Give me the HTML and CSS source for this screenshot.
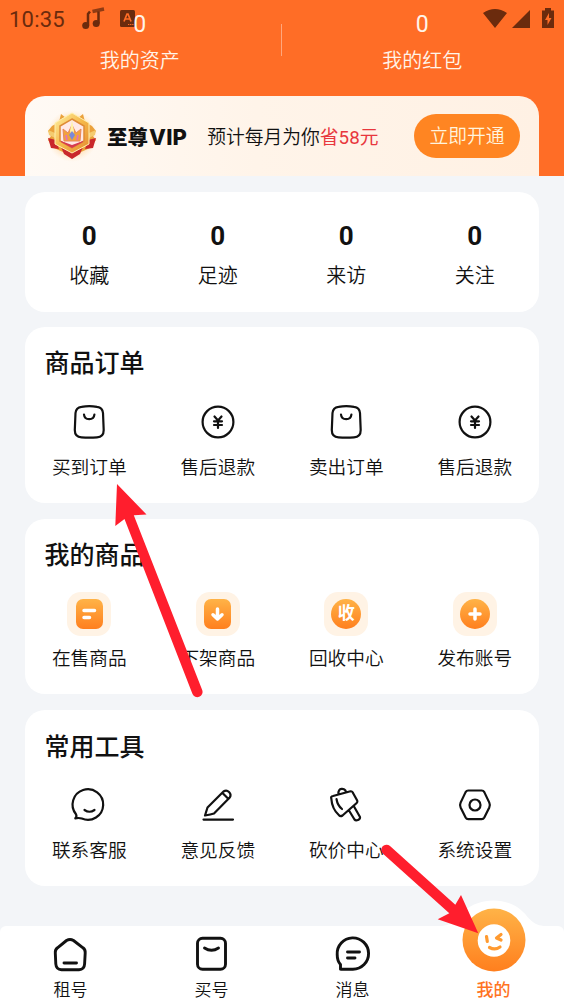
FILE: index.html
```html
<!DOCTYPE html>
<html lang="zh-CN">
<head>
<meta charset="utf-8">
<title>我的</title>
<link rel="stylesheet" href="styles.css">
</head>
<body>
<div class="screen">
  <div class="status">
    <span class="clock">10:35</span>
    <svg class="music" width="24" height="24" viewBox="0 0 24 24"><g fill="currentColor"><circle cx="4.700" cy="18.500" r="3.500"/><circle cx="15.200" cy="16.500" r="3.500"/></g><path d="M7 18.500V7l2-2.500M17.500 16.500V4.500" fill="none" stroke="currentColor" stroke-width="2.500"/><path d="M11.500 4.500 23 2" stroke="currentColor" stroke-width="3.500" opacity=".75"/></svg>
    <svg class="keyboard" width="15" height="17" viewBox="0 0 15 17"><rect width="15" height="17" rx="1.500" fill="currentColor"/><path d="M4 11.500 7 4h1l3 7.500M5 9h5" fill="none" stroke="#ff6d26" stroke-width="1.700"/><path d="M8 14.500h5.500" stroke="#ff6d26" stroke-dasharray="1.300 .8"/></svg>
    <svg class="signals" width="72" height="21" viewBox="0 0 72 21" fill="currentColor"><path d="M0 5Q12-3 24 5L12 20ZM29 20 47 2v18ZM59 2.500h3V0h6v2.500h3V20H59Z"/><path d="m66 5-4 7h2.500v5l4-7H66Z" fill="#ff6d26"/></svg>
  </div>

  <header class="header">
    <div class="assets">
      <div class="asset"><span class="asset-num">0</span><span class="asset-label">我的资产</span></div>
      <div class="asset-divider"></div>
      <div class="asset"><span class="asset-num">0</span><span class="asset-label">我的红包</span></div>
    </div>
    <div class="vip">
      <svg class="medal" width="52" height="52" viewBox="0 0 52 52">
        <defs>
          <linearGradient id="gold" x2="1" y2="1"><stop stop-color="#fff0a0"/><stop offset=".5" stop-color="#f5b94b"/><stop offset="1" stop-color="#e58a30"/></linearGradient>
          <radialGradient id="halo"><stop offset=".65" stop-color="#ffcf8e" stop-opacity=".6"/><stop offset="1" stop-color="#ffe3bd" stop-opacity="0"/></radialGradient>
        </defs>
        <circle cx="26" cy="26" r="26" fill="url(#halo)"/>
        <path d="m15 4-2 8-7 4-4 5 3 5-3 4 6 8 9 4 9 6 9-6 9-4 6-8-3-4 3-5-4-5-7-4-2-8-5 4H20Z" fill="#eba23c"/>
        <path d="m2 28 8 2 3 9-8-1ZM50 28l-8 2-3 9 8-1ZM15 37l11 5 11-5-3 7-8 5-8-5Z" fill="#c9272b"/>
        <path d="m2 20 7 3v5l-6-3ZM50 20l-7 3v5l6-3Z" fill="#f4cc70"/>
        <path d="m26 3 17 10v21L26 43 9 34V13Z" fill="url(#gold)" stroke="#fff0af"/>
        <path d="m26 9 12 7v15l-12 7-12-7V16Z" fill="#ffe9e6" stroke="#df8b36" stroke-width="1.500"/>
        <path d="m15 31 11 4 11-4v1l-11 6-11-6Z" fill="#d63b50"/>
        <path d="m17 19 5 4 4-8 4 8 5-4-1 12H18Z" fill="#f2a43c" stroke="#e8875c"/>
        <path d="m26 10 2 11-2 7-2-7Z" fill="#fff2a8"/><path d="m26 21 3 4-3 5-3-5Z" fill="#7b89da"/>
        <path d="m20 25 1 5M32 25l-1 5" stroke="#e474b3" stroke-width="1.800"/>
      </svg>
      <strong class="vip-title">至尊<span class="latin">VIP</span></strong>
      <span class="vip-text">预计每月为你<em class="save">省58元</em></span>
      <button class="vip-button">立即开通</button>
    </div>
  </header>

  <main class="content">
    <section class="card stats">
      <div class="stat"><b class="stat-num">0</b><span class="stat-label">收藏</span></div>
      <div class="stat"><b class="stat-num">0</b><span class="stat-label">足迹</span></div>
      <div class="stat"><b class="stat-num">0</b><span class="stat-label">来访</span></div>
      <div class="stat"><b class="stat-num">0</b><span class="stat-label">关注</span></div>
    </section>

    <section class="card">
      <h2 class="card-title">商品订单</h2>
      <div class="grid">
        <div class="item"><svg class="icon" viewBox="0 0 44 44"><path d="M14.500 6.800Q22.300 5.600 30 6.800 35.600 7.500 36 13L36.700 30Q36.700 37 30 37.300 22.300 37.800 14.500 37.300 7.800 37 7.800 30L8.500 13Q9 7.500 14.500 6.800ZM17 14.500c.5 6.200 9.900 6.200 10.400 0"/></svg><span>买到订单</span></div>
        <div class="item"><svg class="icon" viewBox="0 0 44 44"><circle cx="22" cy="22" r="15.400"/><path d="m18.500 16.500 3.500 4 3.500-4M18 21.300h8M18 25h8M22 20.500v7.500"/></svg><span>售后退款</span></div>
        <div class="item"><svg class="icon" viewBox="0 0 44 44"><path d="M14.500 6.800Q22.300 5.600 30 6.800 35.600 7.500 36 13L36.700 30Q36.700 37 30 37.300 22.300 37.800 14.500 37.300 7.800 37 7.800 30L8.500 13Q9 7.500 14.500 6.800ZM17 14.500c.5 6.200 9.900 6.200 10.400 0"/></svg><span>卖出订单</span></div>
        <div class="item"><svg class="icon" viewBox="0 0 44 44"><circle cx="22" cy="22" r="15.400"/><path d="m18.500 16.500 3.500 4 3.500-4M18 21.300h8M18 25h8M22 20.500v7.500"/></svg><span>售后退款</span></div>
      </div>
    </section>

    <section class="card">
      <h2 class="card-title">我的商品</h2>
      <div class="grid">
        <div class="item"><div class="tile"><svg class="badge square" viewBox="0 0 27 30"><path d="M8 11.500h10.500M8 18.500h5.500"/></svg></div><span>在售商品</span></div>
        <div class="item"><div class="tile"><svg class="badge square" viewBox="0 0 27 30"><path d="M13.500 10v10M9 15.800l4.500 4.200 4.500-4.200"/></svg></div><span>下架商品</span></div>
        <div class="item"><div class="tile"><div class="badge round">收</div></div><span>回收中心</span></div>
        <div class="item"><div class="tile"><svg class="badge round" viewBox="0 0 30 30"><path d="M15 10v10M10 15h10"/></svg></div><span>发布账号</span></div>
      </div>
    </section>

    <section class="card">
      <h2 class="card-title">常用工具</h2>
      <div class="grid">
        <div class="item"><svg class="icon" viewBox="0 0 44 44"><path d="M9 31.200A15.300 15.300 0 1 1 14.800 35.600Q12.500 34.600 8.300 35.300 10.200 33.300 9 31.200ZM17.500 27q5 3.500 10 0"/></svg><span>联系客服</span></div>
        <div class="item"><svg class="icon" viewBox="0 0 44 44"><path d="M7.500 36.600h29.500M9 32.500l2.500-8L27.500 8.500q3-2 5.500.5 2.800 2.800.5 5.800L18 30.500q-3 1-9 2ZM27 10.500l5.500 5.500"/></svg><span>意见反馈</span></div>
        <div class="item"><svg class="icon" viewBox="0 0 44 44"><path d="M7.300 15.500Q6.500 13.500 9 13L26.500 8.300Q28.500 8 29 10L33.200 17.500Q33.800 19 32.700 20L18.500 32.500Q16.500 34 15 32.300 8 26 7.300 15.500ZM14.500 11C13.500 4.500 21 4.500 22 9M12.500 16q1 6.500 5.500 10M25 27.500l5.500 9c1.500 2 6 .3 5.500-2.500l-6-10.500"/></svg><span>砍价中心</span></div>
        <div class="item"><svg class="icon" viewBox="0 0 44 44"><path d="M15.200 7.500h13.500q1.700 0 2.600 1.600l5 10.500q1.100 2.400 0 4.800l-5 10.100q-.9 1.700-2.600 1.700H15.200q-1.700 0-2.600-1.700l-5-10.100q-1.100-2.400 0-4.800l5-10.500q.9-1.600 2.600-1.600Z"/><circle cx="22" cy="22" r="5.500"/></svg><span>系统设置</span></div>
      </div>
    </section>
  </main>

  <nav class="nav">
    <svg class="nav-hump" width="106" height="30" viewBox="0 0 106 30"><path d="M0 27C14 27 17 18 24 12 40-2 67-2 82 12 89 18 92 27 106 27V30H0Z" fill="#fff"/></svg>
    <div class="nav-item"><svg class="nav-icon" viewBox="0 0 40 40"><path d="M16.500 5.500Q20 3.500 23.500 5.500L33 12.800Q35.500 14.600 35.200 18L34.600 29Q34.300 34.500 29 34.700H11.500Q6.200 34.500 5.800 29L5.300 18Q5 14.600 7.500 12.800ZM14 28h12.500"/></svg><span>租号</span></div>
    <div class="nav-item"><svg class="nav-icon" viewBox="0 0 40 40"><rect x="6.500" y="3.300" width="28" height="31" rx="5"/><path d="M13.500 13q7 4.500 14 0"/></svg><span>买号</span></div>
    <div class="nav-item"><svg class="nav-icon" viewBox="0 0 40 40"><path d="M8.500 34.200V29.500Q5.200 26 5.200 19.500A15.700 15.700 0 1 1 20.900 34.300H9ZM15.500 17H27.500M15.500 23H23"/></svg><span>消息</span></div>
    <div class="nav-item active">
      <svg class="face" width="64" height="64" viewBox="0 0 64 64"><defs><linearGradient id="orange" x2="0" y2="1"><stop stop-color="#ffb347"/><stop offset="1" stop-color="#ff7f1e"/></linearGradient></defs><circle cx="32" cy="32" r="31.500" fill="url(#orange)"/><circle cx="32" cy="32.500" r="16.300" fill="#fff"/><path d="M24.500 28.500l.8 5M39 26.500l-4.500 3.500 4.500 2M27.500 39.500q5.500 3 10.500-.5" fill="none" stroke="#ff9a30" stroke-width="3.200" stroke-linecap="round" stroke-linejoin="round"/></svg>
      <span>我的</span>
    </div>
  </nav>

  <svg class="arrows" width="564" height="1004" viewBox="0 0 564 1004" fill="#ff1e2d">
    <path d="m117 484 29.500 30.500-12.700.7L202.200 690a5 5 0 0 1-9.800 3.800L124.500 519l-9.200 7Z"/>
    <path d="M478.300 933.300 461 895l-5.700 9.800-65.300-58.800a5.200 5.200 0 0 0-7 7.700l66.300 59.600-11.600 6Z"/>
  </svg>
</div>
</body>
</html>
```
FILE: styles.css
```css
* { box-sizing: border-box; }

body {
  margin: 0;
  background: #f3f5f8;
  color: #111;
  font-family: Roboto, "Noto Sans CJK SC", sans-serif;
}

.screen {
  position: relative;
  display: flex;
  flex-direction: column;
  width: 564px;
  height: 1004px;
  overflow: hidden;
}

.status {
  position: absolute;
  z-index: 1;
  inset: 0 0 auto;
  height: 40px;
  color: #6b2b0d;
}
.clock { position: absolute; left: 9px; top: 7px; font-size: 22px; line-height: 26px; letter-spacing: 0.2px; }
.music { position: absolute; left: 81px; top: 7px; }
.keyboard { position: absolute; left: 120px; top: 10px; }
.signals { position: absolute; left: 483px; top: 8px; }

.header {
  display: flex;
  flex-direction: column;
  justify-content: space-between;
  height: 176px;
  padding: 10px 25px 0;
  background: #ff6d26;
}
.assets {
  position: relative;
  z-index: 2;
  display: flex;
  align-items: flex-start;
  margin: 0 -24px 0 -26px;
  color: #fff4e9;
}
.asset { flex: 1; display: flex; flex-direction: column; align-items: center; gap: 6px; }
.asset-num { font-size: 23px; line-height: 30px; }
.asset-label { font-size: 20px; line-height: 30px; font-weight: 350; }
.asset-divider { width: 1px; height: 32px; margin-top: 14px; background: #ffa77d; }

.vip {
  display: flex;
  align-items: center;
  height: 80px;
  padding: 0 19px 0 21px;
  border-radius: 20px 20px 0 0;
  background: linear-gradient(90deg, #fffaf5, #fff4e9 45%, #fff1e4);
}
.vip-title { margin-left: 9px; padding-top: 2px; font-size: 20.500px; line-height: 28px; font-weight: 900; font-family: Inter, "Noto Sans CJK SC", sans-serif; }
.latin { margin-left: 1px; font-size: 22px; font-weight: 800; letter-spacing: 0.2px; }
.vip-text { margin-left: 20px; padding-top: 3px; font-size: 18.800px; line-height: 28px; font-weight: 350; white-space: nowrap; }
.save { font-style: normal; font-weight: 400; color: #e8373d; }
.vip-button {
  width: 106px;
  height: 44px;
  margin-left: auto;
  padding: 2px 0 0;
  border: 0;
  border-radius: 22px;
  background: #ff8522;
  color: #fff4df;
  font: 350 18.800px/42px Roboto, "Noto Sans CJK SC", sans-serif;
}

.content { display: flex; flex-direction: column; gap: 16px; padding: 16px 25px 0; }
.card { height: 175.600px; padding-top: 20.400px; border-radius: 20px; background: #fff; }
.stats { display: grid; grid-template-columns: repeat(4, 1fr); height: 119.500px; margin-bottom: -0.500px; padding-top: 28px; }
.stat { display: flex; flex-direction: column; align-items: center; gap: 8px; }
.stat-num { font-size: 26px; line-height: 32px; font-weight: 700; }
.stat-label { font-size: 20px; line-height: 32px; font-weight: 350; }
.card-title { margin: 0 0 4.800px 19.500px; font-size: 25px; line-height: 34px; font-weight: 500; }
.grid { display: grid; grid-template-columns: repeat(4, 1fr); }
.item { display: flex; flex-direction: column; align-items: center; gap: 9.500px; padding-top: 14px; font-size: 18.700px; line-height: 28px; font-weight: 350; }

.icon { width: 44px; height: 44px; }
.icon, .nav-icon { fill: none; stroke: #111; stroke-width: 2.200; stroke-linecap: round; stroke-linejoin: round; }
.tile { display: grid; place-items: center; width: 44px; height: 44px; border-radius: 14px; background: #fff3e5; }
.badge {
  background: linear-gradient(#ffb347, #ff7f1e);
  color: #fff;
  fill: none;
  stroke: #fff;
  stroke-width: 3.500;
  stroke-linecap: round;
  stroke-linejoin: round;
}
.square { width: 27px; height: 30px; border-radius: 7px; }
.round { width: 30px; height: 30px; border-radius: 50%; }
div.badge { font-size: 17px; line-height: 29px; font-weight: 700; text-align: center; }

.nav {
  position: relative;
  display: grid;
  grid-template-columns: repeat(4, 1fr);
  height: 78px;
  margin-top: auto;
  border-radius: 6px 6px 0 0;
  background: #fff;
}
.nav-hump { position: absolute; left: 440px; top: -27px; }
.nav-item { position: relative; display: flex; flex-direction: column; align-items: center; gap: 3px; padding-top: 9px; font-size: 17px; line-height: 24px; font-weight: 350; }
.nav-icon { width: 40px; height: 40px; margin-left: -1px; stroke-width: 2.900; }
.active { padding-top: 52px; color: #ff741f; font-weight: 500; }
.face { position: absolute; left: 38.500px; top: -18.500px; }
.arrows { position: absolute; z-index: 3; left: 0; top: 0; pointer-events: none; }
```
